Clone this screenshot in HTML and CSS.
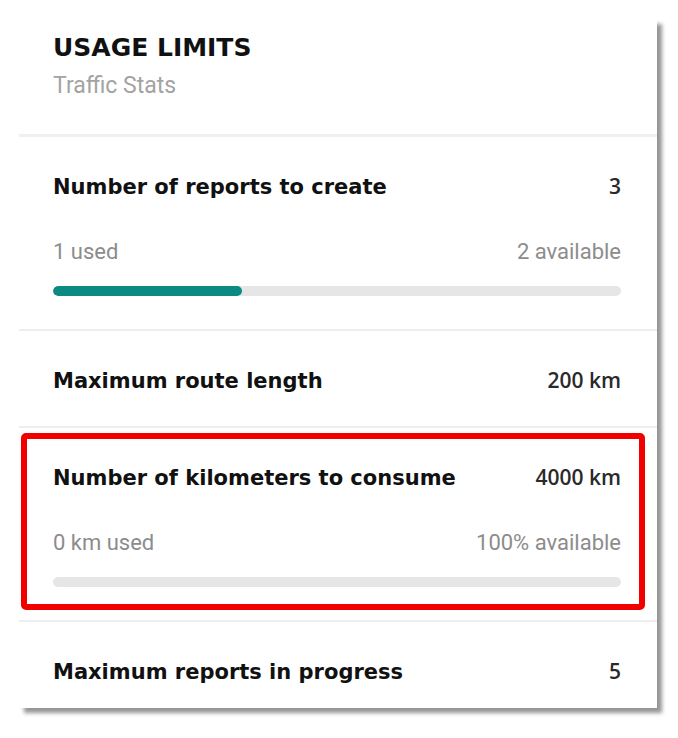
FILE: index.html
```html
<!DOCTYPE html>
<html lang="en">
<head>
    <meta charset="UTF-8">
    <meta name="viewport" content="width=device-width, initial-scale=1.0">
    <title>Usage limits - Traffic Stats</title>
    <link rel="stylesheet" href="styles.css">
</head>
<body>
    <div class="limits-card">
        <div class="limits-header">
            <h1 class="limits-title">USAGE LIMITS</h1>
            <p class="limits-subtitle">Traffic Stats</p>
        </div>

        <div class="limit-row">
            <div class="limit-line">
                <span class="limit-label">Number of reports to create</span>
                <span class="limit-value">3</span>
            </div>
            <div class="limit-usage">
                <span>1 used</span>
                <span>2 available</span>
            </div>
            <div class="progress">
                <div class="progress-fill" style="width: 33.33%"></div>
            </div>
        </div>

        <div class="limit-row">
            <div class="limit-line">
                <span class="limit-label">Maximum route length</span>
                <span class="limit-value">200 km</span>
            </div>
        </div>

        <div class="limit-row highlighted">
            <div class="limit-line">
                <span class="limit-label">Number of kilometers to consume</span>
                <span class="limit-value">4000 km</span>
            </div>
            <div class="limit-usage">
                <span>0 km used</span>
                <span>100% available</span>
            </div>
            <div class="progress">
                <div class="progress-fill" style="width: 0%"></div>
            </div>
        </div>

        <div class="limit-row">
            <div class="limit-line">
                <span class="limit-label">Maximum reports in progress</span>
                <span class="limit-value">5</span>
            </div>
        </div>
    </div>
</body>
</html>
```

FILE: styles.css
```css
* {
    margin: 0;
    padding: 0;
    box-sizing: border-box;
}

html {
    background: #fff;
}

body {
    min-height: 738px;
    padding: 19px 0 30px 19px;
    font-family: 'DejaVu Sans', Verdana, sans-serif;
}

.limits-card {
    width: 638px;
    background: white;
    box-shadow: 5px 5px 4px rgba(0, 0, 0, 0.42);
}

.limits-header {
    padding: 13px 36px 34px 34px;
    border-bottom: 3px solid #f0f0f0;
}

.limits-title {
    font-size: 25px;
    line-height: 32px;
    font-weight: bold;
    color: #111;
}

.limits-subtitle {
    margin-top: 8px;
    font-family: Roboto, 'Liberation Sans', sans-serif;
    font-size: 23px;
    line-height: 28px;
    color: #a3a3a3;
}

.limit-row {
    padding: 37px 36px 33px 34px;
    border-bottom: 2px solid #eeeeee;
}

.limit-row:last-child {
    border-bottom: none;
    padding-bottom: 24px;
}

/* red frame drawn over the highlighted row */
.highlighted {
    position: relative;
}

.highlighted::after {
    content: '';
    position: absolute;
    top: 5px;
    left: 2px;
    right: 12px;
    bottom: 10px;
    border: 6px solid #f20000;
    border-radius: 5px;
}

.limit-line {
    display: flex;
    justify-content: space-between;
    align-items: baseline;
    line-height: 24px;
}

.limit-label {
    font-size: 21px;
    font-weight: bold;
    color: #111;
}

.limit-value {
    font-family: 'Open Sans', 'DejaVu Sans', sans-serif;
    font-size: 21px;
    font-weight: 600;
    color: #2a2a2a;
}

.limit-usage {
    display: flex;
    justify-content: space-between;
    margin-top: 40px;
    font-family: Roboto, 'Liberation Sans', sans-serif;
    font-size: 22px;
    line-height: 26px;
    color: #8c8c8c;
}

.progress {
    margin-top: 21px;
    height: 10px;
    border-radius: 5px;
    background: #e6e6e6;
    overflow: hidden;
}

.progress-fill {
    height: 100%;
    border-radius: 5px;
    background: #0b8a82;
}
```
